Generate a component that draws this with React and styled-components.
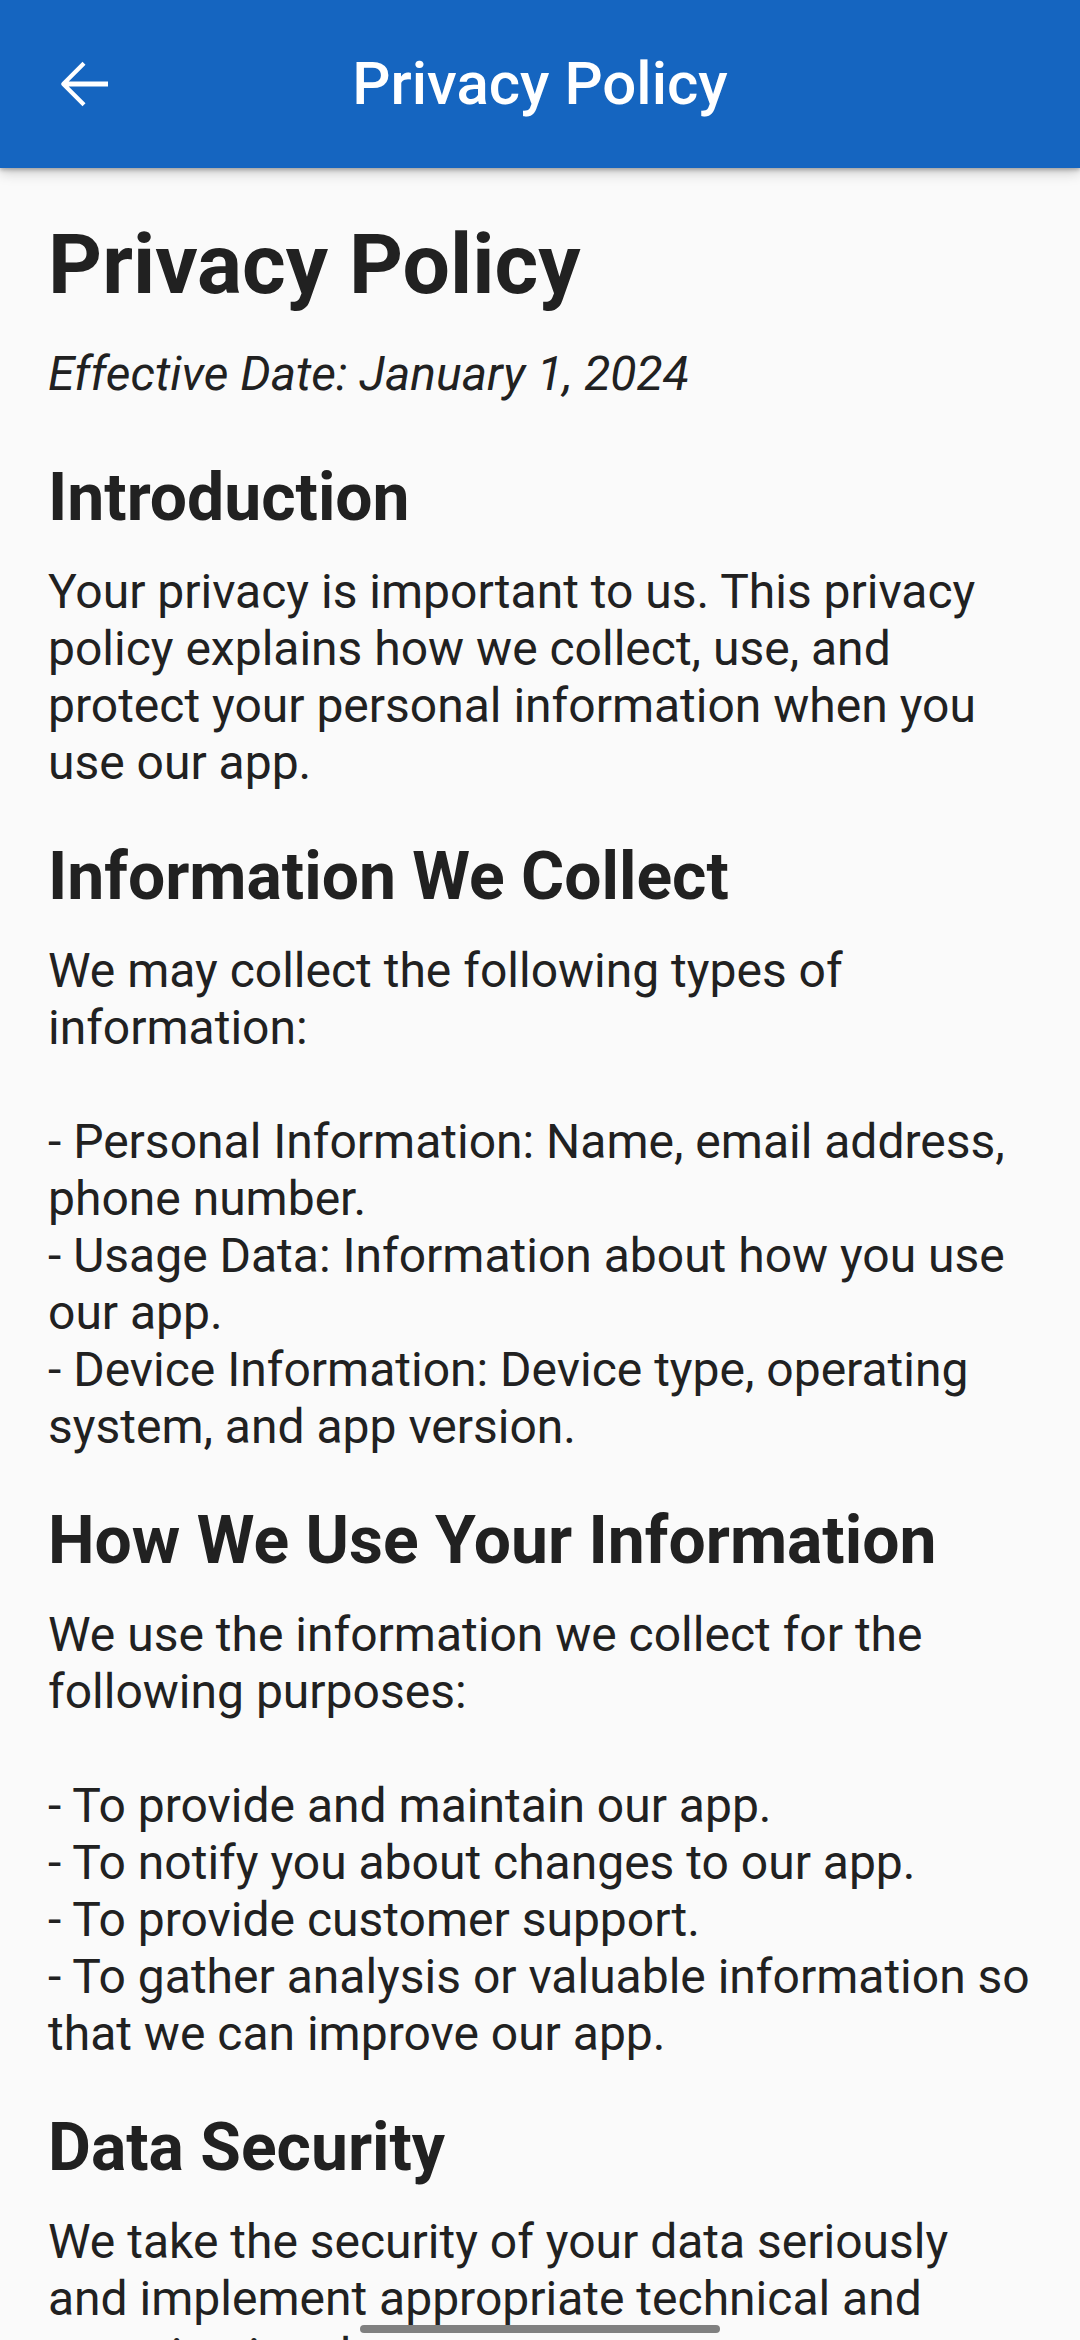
import React from 'react';
import styled, { createGlobalStyle } from 'styled-components';

const GlobalStyle = createGlobalStyle`
  html, body {
    margin: 0;
    padding: 0;
    background: #fafafa;
  }
  body {
    font-family: Roboto, "Liberation Sans", Arial, sans-serif;
    color: #212121;
  }
`;

function BackIcon() {
  return (
    <svg width="72" height="72" viewBox="0 0 24 24" fill="#ffffff">
      <path d="M20 11.2H6.9l5.6-5.6-1-1L4.6 11.5a.7.7 0 0 0 0 1l6.9 6.9 1-1-5.6-5.6H20v-1.6z" />
    </svg>
  );
}

function App() {
  return (
    <Page>
      <GlobalStyle />
      <AppBar>
        <BackButton aria-label="Back">
          <BackIcon />
        </BackButton>
        <BarTitle>Privacy Policy</BarTitle>
        <span />
      </AppBar>

      <Content>
        <Title>Privacy Policy</Title>
        <DateLine>Effective Date: January 1, 2024</DateLine>
        <Sections>
          {SECTIONS.map(({ id, heading, body }) => {
            return (
              <Section key={id}>
                <Heading>{heading}</Heading>
                <Body>{body}</Body>
              </Section>
            );
          })}
        </Sections>
      </Content>

      <HomeIndicator />
    </Page>
  );
}

const Page = styled.div`
  min-height: 2340px;
  background: #fafafa;
  overflow: hidden;
`;

const AppBar = styled.header`
  display: grid;
  grid-template-columns: 1fr auto 1fr;
  align-items: center;
  height: 168px;
  background: #1565c0;
  box-shadow: 0 2px 4px rgba(0, 0, 0, 0.25), 0 5px 12px rgba(0, 0, 0, 0.18);
  position: relative;
  z-index: 1;
`;

const BackButton = styled.button`
  display: flex;
  align-items: center;
  justify-content: center;
  width: 72px;
  height: 72px;
  margin-left: 48px;
  padding: 0;
  border: none;
  background: transparent;
`;

const BarTitle = styled.h1`
  margin: 0;
  font-size: 60px;
  font-weight: 500;
  color: #ffffff;
  line-height: 1;
`;

const Content = styled.main`
  padding: 45px 48px 0;
`;

const Title = styled.h2`
  margin: 0 0 29px;
  font-size: 84px;
  font-weight: 700;
  line-height: 103px;
`;

const DateLine = styled.p`
  margin: 0;
  font-size: 48px;
  font-style: italic;
  line-height: 57px;
`;

const Sections = styled.div`
  display: flex;
  flex-direction: column;
  gap: 46px;
  margin-top: 56px;
`;

const Section = styled.section`
  display: flex;
  flex-direction: column;
  gap: 25px;
`;

const Heading = styled.h3`
  margin: 0;
  font-size: 66px;
  font-weight: 700;
  line-height: 80px;
`;

const Body = styled.p`
  margin: 0;
  font-size: 48px;
  line-height: 57px;
  white-space: pre-line;
`;

const HomeIndicator = styled.div`
  position: fixed;
  left: 360px;
  top: 2325px;
  width: 360px;
  height: 8px;
  border-radius: 4px;
  background: #808080;
`;

export default App;

const SECTIONS = [
  {
    id: 1,
    heading: 'Introduction',
    body: 'Your privacy is important to us. This privacy policy explains how we collect, use, and protect your personal information when you use our app.',
  },
  {
    id: 2,
    heading: 'Information We Collect',
    body: 'We may collect the following types of information:\n\n- Personal Information: Name, email address, phone number.\n- Usage Data: Information about how you use our app.\n- Device Information: Device type, operating system, and app version.',
  },
  {
    id: 3,
    heading: 'How We Use Your Information',
    body: 'We use the information we collect for the following purposes:\n\n- To provide and maintain our app.\n- To notify you about changes to our app.\n- To provide customer support.\n- To gather analysis or valuable information so that we can improve our app.',
  },
  {
    id: 4,
    heading: 'Data Security',
    body: 'We take the security of your data seriously and implement appropriate technical and organizational measures to protect your personal information.',
  },
];
